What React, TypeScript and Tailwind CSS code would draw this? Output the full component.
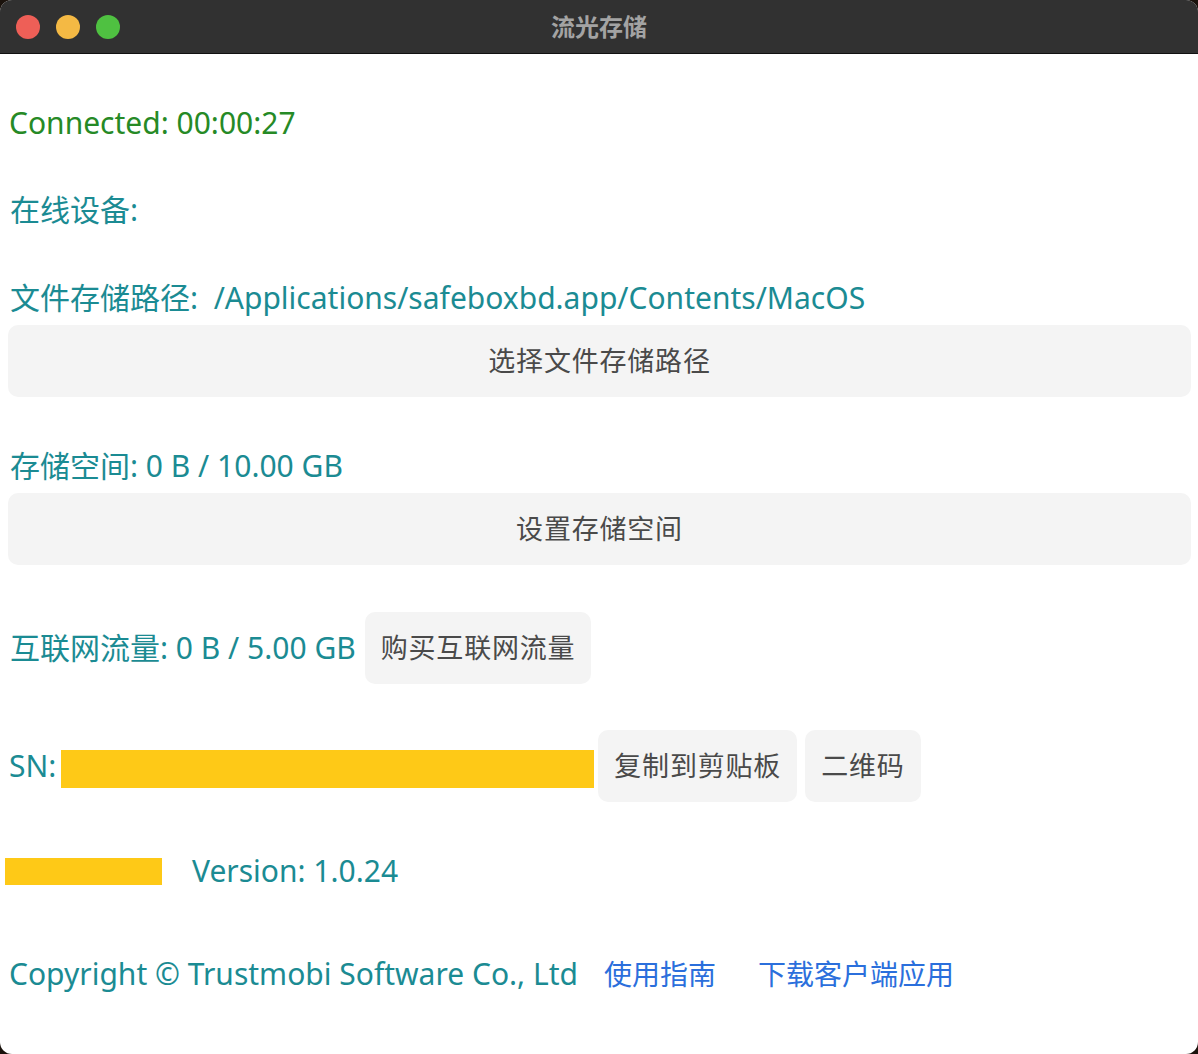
import React from 'react';

const FONT = '"Noto Sans", "Noto Sans CJK SC", sans-serif';

const GrayButton: React.FC<{ label: string; className?: string }> = ({ label, className = '' }) => (
  <button
    className={`h-[72px] rounded-[10px] bg-[#f4f4f4] text-[27px] tracking-[0.8px] text-[#4a4a4a] ${className}`}
  >
    {label}
  </button>
);

export default function App() {
  return (
    <div className="h-[1054px] w-[1198px] bg-[#1a120c]" style={{ fontFamily: FONT }}>
      <div className="flex h-full w-full flex-col overflow-hidden rounded-[12px] bg-white">
        {/* title bar */}
        <div className="relative flex h-[54px] shrink-0 items-center border-b border-[#111111] bg-[#313131]">
          <div className="ml-[16px] flex gap-[16px]">
            <span className="h-[24px] w-[24px] rounded-full bg-[#ee5f57]" />
            <span className="h-[24px] w-[24px] rounded-full bg-[#f4b944]" />
            <span className="h-[24px] w-[24px] rounded-full bg-[#4fc141]" />
          </div>
          <div className="absolute inset-0 flex items-center justify-center text-[24px] font-bold text-[#a3a3a3]">
            流光存储
          </div>
        </div>

        <div className="flex flex-col pl-[8px] pr-[7px] text-[30px] leading-[40px] text-[#1b8b93]">
          <div className="mt-[49px] pl-[1px] text-[#268a26]">Connected: 00:00:27</div>

          <div className="mt-[47px] pl-[2px]">在线设备:</div>

          <div className="mt-[48px] pl-[2px]">文件存储路径:&nbsp; /Applications/safeboxbd.app/Contents/MacOS</div>
          <GrayButton label="选择文件存储路径" className="mt-[7px] w-full" />

          <div className="mt-[49px] pl-[2px]">存储空间: 0 B / 10.00 GB</div>
          <GrayButton label="设置存储空间" className="mt-[7px] w-full" />

          <div className="mt-[47px] flex items-center gap-[9px]">
            <span className="pl-[2px]">互联网流量: 0 B / 5.00 GB</span>
            <GrayButton label="购买互联网流量" className="px-[16px]" />
          </div>

          <div className="mt-[46px] flex items-center">
            <span className="pl-[1px]">SN:</span>
            <span className="ml-[5px] mt-[6px] h-[38px] w-[533px] bg-[#fec917]" />
            <GrayButton label="复制到剪贴板" className="ml-[4px] px-[16px]" />
            <GrayButton label="二维码" className="ml-[8px] px-[16px]" />
          </div>

          <div className="mt-[49px] flex items-center">
            <span className="ml-[-3px] h-[27px] w-[157px] bg-[#fec917]" />
            <span className="ml-[30px]">Version: 1.0.24</span>
          </div>

          <div className="mt-[63px] flex items-center">
            <span className="pl-[1px]">Copyright © Trustmobi Software Co., Ltd</span>
            <a className="ml-[26px] text-[28px] text-[#2b6fdc]">使用指南</a>
            <a className="ml-[42px] text-[28px] text-[#2b6fdc]">下载客户端应用</a>
          </div>
        </div>
      </div>
    </div>
  );
}
